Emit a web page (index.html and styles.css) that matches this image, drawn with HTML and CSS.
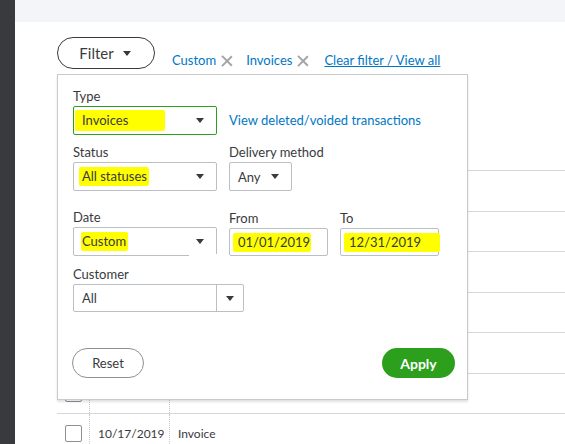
FILE: index.html
```html
<!DOCTYPE html>
<html lang="en">
<head>
  <meta charset="UTF-8" />
  <meta name="viewport" content="width=device-width, initial-scale=1.0"/>
  <title>Sales transactions</title>
  <link rel="stylesheet" href="styles.css">
</head>
<body>

  <div class="app">
    <aside class="sidebar"></aside>

    <main class="main">
      <div class="top-band"></div>

      <div class="content">
        <div class="filter-bar">
          <button class="filter-btn">Filter <span class="caret"></span></button>
          <div class="chips">
            <span class="chip">Custom <span class="chip-x"></span></span>
            <span class="chip">Invoices <span class="chip-x"></span></span>
            <a class="clear-link" href="#">Clear filter / View all</a>
          </div>
        </div>

        <div class="table-area">
          <div class="rows">
            <div class="row head"></div>
            <div class="row"><span class="cell check"><span class="box"></span></span><span class="cell date">11/28/2019</span><span class="cell type">Invoice</span></div>
            <div class="row"><span class="cell check"><span class="box"></span></span><span class="cell date">11/22/2019</span><span class="cell type">Invoice</span></div>
            <div class="row"><span class="cell check"><span class="box"></span></span><span class="cell date">11/15/2019</span><span class="cell type">Invoice</span></div>
            <div class="row"><span class="cell check"><span class="box"></span></span><span class="cell date">11/08/2019</span><span class="cell type">Invoice</span></div>
            <div class="row"><span class="cell check"><span class="box"></span></span><span class="cell date">11/01/2019</span><span class="cell type">Invoice</span></div>
            <div class="row"><span class="cell check"><span class="box"></span></span><span class="cell date">10/25/2019</span><span class="cell type">Invoice</span></div>
            <div class="row"><span class="cell check"><span class="box"></span></span><span class="cell date">10/17/2019</span><span class="cell type">Invoice</span></div>
          </div>

          <!-- filter dropdown, open over the list -->
          <div class="filter-panel">
            <div class="field-row">
              <div class="field w-144">
                <label>Type</label>
                <div class="select focused"><span class="mark mark-type">Invoices</span><span class="arrow"></span></div>
              </div>
              <a class="side-link" href="#">View deleted/voided transactions</a>
            </div>

            <div class="field-row gap-s">
              <div class="field w-144">
                <label>Status</label>
                <div class="select"><span class="mark mark-status">All statuses</span><span class="arrow"></span></div>
              </div>
              <div class="field w-63">
                <label>Delivery method</label>
                <div class="select"><span>Any</span><span class="arrow"></span></div>
              </div>
            </div>

            <div class="field-row gap-l">
              <div class="field w-144">
                <label>Date</label>
                <div class="select cut"><span class="mark mark-date">Custom</span><span class="arrow"></span></div>
              </div>
              <div class="field w-99">
                <label>From</label>
                <div class="input"><span class="mark mark-from">01/01/2019</span></div>
              </div>
              <div class="field w-99">
                <label>To</label>
                <div class="input"><span class="mark mark-to">12/31/2019</span></div>
              </div>
            </div>

            <div class="field-row gap-m">
              <div class="field w-171">
                <label>Customer</label>
                <div class="combo"><span class="combo-text">All</span><span class="combo-btn"><span class="arrow"></span></span></div>
              </div>
            </div>

            <div class="panel-footer">
              <button class="btn-reset">Reset</button>
              <button class="btn-apply">Apply</button>
            </div>
          </div>
        </div>
      </div>
    </main>
  </div>

</body>
</html>
```

FILE: styles.css
```css
* {
  box-sizing: border-box;
  margin: 0;
  padding: 0;
}

body {
  font-family: Lato, 'Open Sans', sans-serif;
  color: #393a3d;
  background: #fff;
  overflow: hidden;
}

.app {
  display: flex;
  height: 444px;
  overflow: hidden;
}

.sidebar {
  width: 15px;
  background: #393a3d;
  flex-shrink: 0;
}

.main {
  flex: 1;
  display: flex;
  flex-direction: column;
}

.top-band {
  height: 22px;
  flex-shrink: 0;
  background: #f4f5f8;
}

.content {
  padding-left: 42px;
  flex-shrink: 0;
}

/* filter bar */
.filter-bar {
  display: flex;
  align-items: flex-start;
  margin-top: 15px;
}

.filter-btn {
  width: 98px;
  height: 32px;
  border: 1px solid #393a3d;
  border-radius: 16px;
  background: #fff;
  font-family: inherit;
  font-size: 15px;
  color: #393a3d;
  display: flex;
  align-items: center;
  justify-content: center;
  gap: 9px;
  padding-right: 2px;
}

.caret {
  width: 0;
  height: 0;
  border-left: 4px solid transparent;
  border-right: 4px solid transparent;
  border-top: 5px solid #393a3d;
}

.chips {
  display: flex;
  align-items: center;
  margin-top: 15px;
  margin-left: 17px;
  font-size: 13px;
  line-height: 16px;
}

.chip {
  color: #0077c5;
  display: flex;
  align-items: center;
  gap: 5px;
  margin-right: 14px;
}

.chip-x {
  position: relative;
  width: 11px;
  height: 11px;
}

.chip-x::before,
.chip-x::after {
  content: '';
  position: absolute;
  left: 5px;
  top: -1px;
  width: 1.5px;
  height: 14px;
  background: #a3a5a8;
  transform: rotate(45deg);
}

.chip-x::after {
  transform: rotate(-45deg);
}

.clear-link {
  color: #0077c5;
  text-decoration: underline;
  margin-left: 2px;
}

/* list behind the dropdown */
.table-area {
  position: relative;
  margin-top: 5px;
}

.rows {
  font-size: 12px;
}

.row {
  display: flex;
  height: 40.5px;
  border-bottom: 1px solid #d4d7dc;
}

.row.head {
  height: 97px;
}

.cell {
  display: flex;
  align-items: center;
}

.check {
  width: 32px;
  padding-left: 8px;
}

.box {
  width: 17px;
  height: 17px;
  border: 1px solid #8d9096;
  border-radius: 2px;
  background: #fff;
}

.date {
  width: 81px;
  padding-left: 8px;
  border-left: 1px dotted #c4c6ca;
  border-right: 1px dotted #c4c6ca;
}

.type {
  padding-left: 8px;
}

/* filter dropdown */
.filter-panel {
  position: absolute;
  top: 0;
  left: 0;
  width: 411px;
  height: 326px;
  background: #fff;
  border: 1px solid #c8cacd;
  box-shadow: 0 2px 2px rgba(0, 0, 0, 0.12);
  padding: 13px 12px 0 15px;
}

.field-row {
  display: flex;
  align-items: flex-end;
  gap: 12px;
}

.gap-s { margin-top: 9px; }
.gap-l { margin-top: 18px; }
.gap-m { margin-top: 10px; }

.field label {
  display: block;
  font-size: 13px;
  line-height: 16px;
  margin-bottom: 2px;
  white-space: nowrap;
}

.w-144 { width: 144px; }
.w-63 { width: 63px; }
.w-99 { width: 99px; }
.w-171 { width: 171px; }

.select,
.input,
.combo {
  height: 29px;
  border: 1px solid #babec5;
  border-radius: 2px;
  font-size: 13px;
  display: flex;
  align-items: center;
  position: relative;
}

.input,
.combo {
  height: 28px;
}

.select {
  justify-content: space-between;
  padding: 0 12px 0 8px;
}

.select.focused {
  border-color: #2ca01c;
}

/* the lower edge of the date box is broken off on the right */
.select.cut::after {
  content: '';
  position: absolute;
  right: -1px;
  bottom: -1px;
  width: 28px;
  height: 2px;
  background: #fff;
}

.input {
  padding-left: 8px;
}

.arrow {
  width: 0;
  height: 0;
  border-left: 4px solid transparent;
  border-right: 4px solid transparent;
  border-top: 5px solid #393a3d;
}

.combo {
  padding-left: 8px;
  justify-content: space-between;
}

.combo-btn {
  width: 27px;
  height: 100%;
  border-left: 1px solid #babec5;
  display: flex;
  align-items: center;
  justify-content: center;
}

.side-link {
  color: #0077c5;
  text-decoration: none;
  font-size: 13px;
  line-height: 29px;
}

/* yellow marker strokes */
.mark {
  background: #ffff00;
  line-height: 19px;
  border-radius: 2px;
}

.mark-type { margin-left: -7px; padding: 1px 37px 1px 7px; }
.mark-status { margin-left: -3px; padding: 0 2px 0 3px; }
.mark-date { margin-left: -1px; padding: 0 2px 0 1px; }
.mark-from { margin-left: -5px; padding: 0 1px 0 5px; }
.mark-to { margin-left: -5px; padding: 0 19px 0 5px; }

.panel-footer {
  display: flex;
  justify-content: space-between;
  margin-top: 36px;
}

.btn-reset,
.btn-apply {
  height: 30px;
  border-radius: 15px;
  font-family: inherit;
  cursor: pointer;
}

.btn-reset {
  width: 72px;
  margin-left: -1px;
  background: #fff;
  border: 1px solid #8d9096;
  color: #393a3d;
  font-size: 13px;
}

.btn-apply {
  width: 73px;
  background: #2ca01c;
  border: none;
  color: #fff;
  font-size: 14px;
  font-weight: bold;
}
```
